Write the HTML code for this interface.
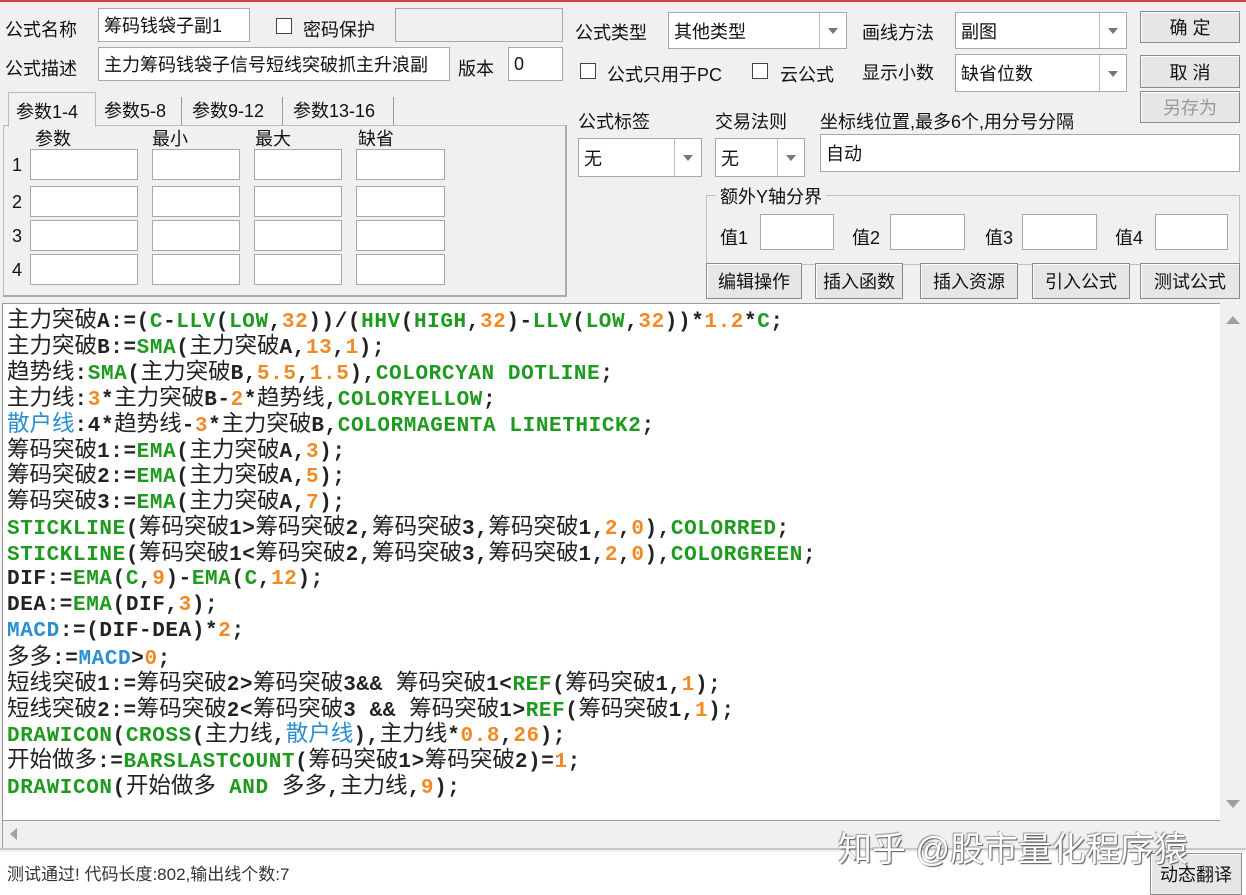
<!DOCTYPE html>
<html><head><meta charset="utf-8"><style>
*{box-sizing:border-box;margin:0;padding:0}
body{width:1246px;height:895px;background:#f0f0f0;position:relative;overflow:hidden;font-family:"Liberation Sans","Noto Sans CJK SC",sans-serif;font-size:18px;color:#111}
.a{position:absolute;white-space:nowrap}
.in{position:absolute;background:#fff;border:1px solid #a8a8a8;font-size:18px;padding-left:5px;display:flex;align-items:center}
.cb{position:absolute;width:16px;height:16px;border:1px solid #444;background:#fff}
.btn{position:absolute;border:1px solid #8a8a8a;background:#e6e6e6;box-shadow:inset 1px 1px 0 #fff;display:flex;align-items:center;justify-content:center;font-size:18px}
.arr{position:absolute;right:0;top:0;bottom:0;width:27px;border-left:1px solid #bbb;display:flex;align-items:center;justify-content:center}
.arr:after{content:"";border:5px solid transparent;border-top:6px solid #777;margin-top:6px}
#code{position:absolute;left:2px;top:303px;width:1218px;height:518px;background:#fff;border:1px solid #999;border-right:none}
.ln{position:absolute;left:4px;font-family:"Liberation Mono","Noto Sans CJK SC",monospace;font-weight:bold;font-size:21px;letter-spacing:0.6px;white-space:pre;color:#222;line-height:26px}
.c{font-weight:normal;font-size:22.5px;letter-spacing:0;color:#222}
.g{color:#1e9a1e}.o{color:#f08a24}.b,.c.b{color:#2a8fd0}
</style></head><body>
<div class="a" style="left:0;top:0;width:1246px;height:2px;background:#d04040"></div>
<div class="a" style="left:5px;top:16px">公式名称</div>
<div class="in" style="left:98px;top:8px;width:152px;height:34px">筹码钱袋子副1</div>
<div class="cb" style="left:276px;top:18px"></div>
<div class="a" style="left:303px;top:16px">密码保护</div>
<div class="in" style="left:395px;top:8px;width:168px;height:34px;background:#f0f0f0"></div>
<div class="a" style="left:5px;top:55px">公式描述</div>
<div class="in" style="left:98px;top:47px;width:352px;height:34px;overflow:hidden">主力筹码钱袋子信号短线突破抓主升浪副</div>
<div class="a" style="left:458px;top:55px">版本</div>
<div class="in" style="left:508px;top:47px;width:55px;height:34px">0</div>
<div class="a" style="left:3px;top:125px;width:564px;height:172px;border:1px solid #bbb;border-right:2px solid #aaa;border-bottom:2px solid #aaa"></div>
<div class="a" style="left:8px;top:92px;width:88px;height:35px;background:#f0f0f0;border:1px solid #bbb;border-bottom:none;padding:5px 0 0 7px">参数1-4</div>
<div class="a" style="left:98px;top:97px;padding-left:6px;border-right:1px solid #999;height:28px;width:84px">参数5-8</div>
<div class="a" style="left:186px;top:97px;padding-left:6px;border-right:1px solid #999;height:28px;width:97px">参数9-12</div>
<div class="a" style="left:287px;top:97px;padding-left:6px;border-right:1px solid #999;height:28px;width:107px">参数13-16</div>
<div class="a" style="left:35px;top:125px">参数</div>
<div class="a" style="left:152px;top:125px">最小</div>
<div class="a" style="left:255px;top:125px">最大</div>
<div class="a" style="left:358px;top:125px">缺省</div>
<div class="a" style="left:12px;top:155px">1</div><div class="a" style="left:12px;top:192px">2</div><div class="a" style="left:12px;top:226px">3</div><div class="a" style="left:12px;top:260px">4</div>
<div id="grid"></div>
<div class="a" style="left:575px;top:19px">公式类型</div>
<div class="in" style="left:668px;top:12px;width:179px;height:37px">其他类型<div class="arr"></div></div>
<div class="a" style="left:862px;top:19px">画线方法</div>
<div class="in" style="left:955px;top:12px;width:172px;height:37px">副图<div class="arr"></div></div>
<div class="btn" style="left:1140px;top:11px;width:100px;height:32px">确 定</div>
<div class="btn" style="left:1140px;top:55px;width:100px;height:33px">取 消</div>
<div class="btn" style="left:1140px;top:91px;width:100px;height:32px;color:#999">另存为</div>
<div class="cb" style="left:580px;top:63px"></div>
<div class="a" style="left:607px;top:61px">公式只用于PC</div>
<div class="cb" style="left:752px;top:63px"></div>
<div class="a" style="left:780px;top:61px">云公式</div>
<div class="a" style="left:862px;top:59px">显示小数</div>
<div class="in" style="left:955px;top:54px;width:172px;height:38px">缺省位数<div class="arr"></div></div>
<div class="a" style="left:578px;top:108px">公式标签</div>
<div class="a" style="left:715px;top:108px">交易法则</div>
<div class="a" style="left:820px;top:108px">坐标线位置,最多6个,用分号分隔</div>
<div class="in" style="left:578px;top:138px;width:124px;height:39px">无<div class="arr"></div></div>
<div class="in" style="left:715px;top:138px;width:90px;height:39px">无<div class="arr"></div></div>
<div class="in" style="left:820px;top:134px;width:420px;height:38px">自动</div>
<div class="a" style="left:706px;top:195px;width:534px;height:70px;border:1px solid #c0c0c0"></div>
<div class="a" style="left:716px;top:183px;background:#f0f0f0;padding:0 4px">额外Y轴分界</div>
<div class="a" style="left:720px;top:224px">值1</div><div class="in" style="left:760px;top:214px;width:74px;height:36px"></div>
<div class="a" style="left:852px;top:224px">值2</div><div class="in" style="left:890px;top:214px;width:75px;height:36px"></div>
<div class="a" style="left:985px;top:224px">值3</div><div class="in" style="left:1022px;top:214px;width:75px;height:36px"></div>
<div class="a" style="left:1115px;top:224px">值4</div><div class="in" style="left:1155px;top:214px;width:73px;height:36px"></div>
<div class="btn" style="left:706px;top:263px;width:96px;height:36px">编辑操作</div>
<div class="btn" style="left:815px;top:263px;width:88px;height:36px">插入函数</div>
<div class="btn" style="left:920px;top:263px;width:98px;height:36px">插入资源</div>
<div class="btn" style="left:1032px;top:263px;width:98px;height:36px">引入公式</div>
<div class="btn" style="left:1140px;top:263px;width:100px;height:36px">测试公式</div>
<div id="code"></div>
<div class="a" style="left:1220px;top:303px;width:26px;height:518px;background:#f0f0f0"></div>
<div class="a" style="left:1226px;top:316px;border:7px solid transparent;border-bottom:8px solid #a0a0a0;border-top:none"></div>
<div class="a" style="left:1226px;top:800px;border:7px solid transparent;border-top:8px solid #a0a0a0;border-bottom:none"></div>
<div class="a" style="left:2px;top:821px;width:1218px;height:27px;background:#f0f0f0;border-left:1px solid #999"></div>
<div class="a" style="left:10px;top:828px;border:6px solid transparent;border-right:7px solid #a0a0a0;border-left:none"></div>
<div class="a" style="left:0;top:848px;width:1246px;height:2px;background:#c8c8c8"></div>
<div class="a" style="left:0;top:852px;width:1246px;height:43px;background:#fff"></div>
<div class="a" style="left:7px;top:860px;font-size:17px;color:#333">测试通过! 代码长度:802,输出线个数:7</div>
<div class="btn" style="left:1150px;top:853px;width:92px;height:42px">动态翻译</div>
<div class="a" style="left:838px;top:822px;font-size:34px;color:#fff;text-shadow:1px 1px 1px #555,-1px -1px 1px #999">知乎 @股市量化程序猿</div>
<script>
var g='';var cx=[30,152,254,356],cw=[108,88,88,89],ry=[149,186,220,254];
for(var r=0;r<4;r++)for(var c=0;c<4;c++)g+='<div class="in" style="left:'+cx[c]+'px;top:'+ry[r]+'px;width:'+cw[c]+'px;height:31px"></div>';
document.getElementById('grid').innerHTML=g;
var L=[
'主力突破A:=(C-LLV(LOW,32))/(HHV(HIGH,32)-LLV(LOW,32))*1.2*C;',
'主力突破B:=SMA(主力突破A,13,1);',
'趋势线:SMA(主力突破B,5.5,1.5),COLORCYAN DOTLINE;',
'主力线:3*主力突破B-2*趋势线,COLORYELLOW;',
'~散户线~:4*趋势线-3*主力突破B,COLORMAGENTA LINETHICK2;',
'筹码突破1:=EMA(主力突破A,3);',
'筹码突破2:=EMA(主力突破A,5);',
'筹码突破3:=EMA(主力突破A,7);',
'STICKLINE(筹码突破1>筹码突破2,筹码突破3,筹码突破1,2,0),COLORRED;',
'STICKLINE(筹码突破1<筹码突破2,筹码突破3,筹码突破1,2,0),COLORGREEN;',
'DIF:=EMA(C,9)-EMA(C,12);',
'DEA:=EMA(DIF,3);',
'~MACD~:=(DIF-DEA)*2;',
'多多:=~MACD~>0;',
'短线突破1:=筹码突破2>筹码突破3&& 筹码突破1<REF(筹码突破1,1);',
'短线突破2:=筹码突破2<筹码突破3 && 筹码突破1>REF(筹码突破1,1);',
'DRAWICON(CROSS(主力线,~散户线~),主力线*0.8,26);',
'开始做多:=BARSLASTCOUNT(筹码突破1>筹码突破2)=1;',
'DRAWICON(开始做多 AND 多多,主力线,9);'];
var kw=/^(LLV|HHV|LOW|HIGH|SMA|EMA|COLORCYAN|DOTLINE|COLORYELLOW|COLORMAGENTA|LINETHICK2|STICKLINE|COLORRED|COLORGREEN|REF|DRAWICON|CROSS|BARSLASTCOUNT|AND|C)$/;
var esc={'&':'&amp;','<':'&lt;','>':'&gt;'};
var h='';
L.forEach(function(s,i){
 var out='',blue=false,j=0;
 while(j<s.length){
  var ch=s[j];
  if(ch=='~'){blue=!blue;j++;continue;}
  var m=s.slice(j).match(/^[A-Z][A-Z0-9]*/);
  if(m){var w=m[0];var cls=blue?'b':(kw.test(w)?'g':'');out+=cls?'<span class="'+cls+'">'+w+'</span>':w;j+=w.length;continue;}
  if(/[\u4e00-\u9fff]/.test(ch)){out+='<span class="c'+(blue?' b':'')+'">'+ch+'</span>';j++;continue;}
  if(/[0-9.]/.test(ch)){
   var prev=s[j-1];var k=j;while(k<s.length&&/[0-9.]/.test(s[k]))k++;
   var num=s.slice(j,k);
   var orange=/[,*\-=>:]/.test(prev);
   if(i==4&&num=='4')orange=false;
   out+=orange?'<span class="o">'+num+'</span>':num;j=k;continue;}
  out+=esc[ch]||ch;j++;
 }
 h+='<div class="ln" style="top:'+(4+i*25.9)+'px">'+out+'</div>';
});
document.getElementById('code').innerHTML=h;
</script>
</body></html>
